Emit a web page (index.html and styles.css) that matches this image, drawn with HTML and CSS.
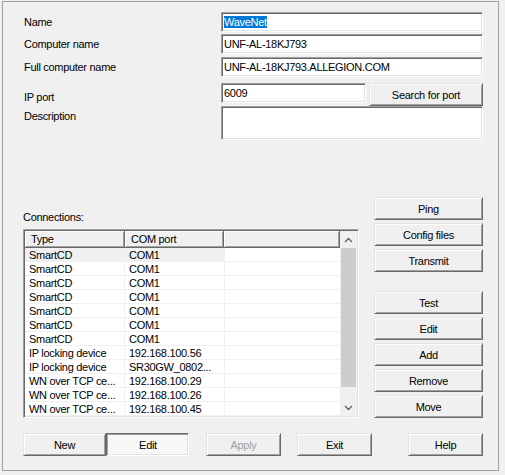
FILE: index.html
```html
<!DOCTYPE html>
<html lang="en">
<head>
  <meta charset="UTF-8">
  <title>WaveNet connection</title>
  <link rel="stylesheet" href="styles.css">
</head>
<body>
  <div class="frame">
    <div class="form">
      <div class="label">Name</div>
      <div class="field"><span class="sel">WaveNet</span></div>
      <div class="label">Computer name</div>
      <div class="field">UNF-AL-18KJ793</div>
      <div class="label">Full computer name</div>
      <div class="field">UNF-AL-18KJ793.ALLEGION.COM</div>
      <div class="label label-low">IP port</div>
      <div class="port-row">
        <div class="field port">6009</div>
        <button class="btn search">Search for port</button>
      </div>
      <div class="label">Description</div>
      <div class="field memo"></div>
    </div>

    <div class="lower">
      <div class="conn">
        <div class="conn-label">Connections:</div>
        <div class="list">
          <div class="list-body">
            <div class="list-head">
              <div class="hcell">Type</div>
              <div class="hcell">COM port</div>
              <div class="hcell"></div>
            </div>
            <div class="row hot"><div>SmartCD</div><div>COM1</div><div></div></div>
            <div class="row"><div>SmartCD</div><div>COM1</div><div></div></div>
            <div class="row"><div>SmartCD</div><div>COM1</div><div></div></div>
            <div class="row"><div>SmartCD</div><div>COM1</div><div></div></div>
            <div class="row"><div>SmartCD</div><div>COM1</div><div></div></div>
            <div class="row"><div>SmartCD</div><div>COM1</div><div></div></div>
            <div class="row"><div>SmartCD</div><div>COM1</div><div></div></div>
            <div class="row"><div>IP locking device</div><div>192.168.100.56</div><div></div></div>
            <div class="row"><div>IP locking device</div><div>SR30GW_0802...</div><div></div></div>
            <div class="row"><div>WN over TCP ce...</div><div>192.168.100.29</div><div></div></div>
            <div class="row"><div>WN over TCP ce...</div><div>192.168.100.26</div><div></div></div>
            <div class="row"><div>WN over TCP ce...</div><div>192.168.100.45</div><div></div></div>
          </div>
          <div class="scrollbar">
            <div class="arrow">
              <svg width="9" height="6" viewBox="0 0 9 6"><path d="M1 5 L4.5 1.5 L8 5" fill="none" stroke="#606060" stroke-width="1.4"/></svg>
            </div>
            <div class="thumb"></div>
            <div class="track"></div>
            <div class="arrow">
              <svg width="9" height="6" viewBox="0 0 9 6"><path d="M1 1 L4.5 4.5 L8 1" fill="none" stroke="#606060" stroke-width="1.4"/></svg>
            </div>
          </div>
        </div>
      </div>

      <div class="side">
        <button class="btn">Ping</button>
        <button class="btn">Config files</button>
        <button class="btn group-end">Transmit</button>
        <button class="btn">Test</button>
        <button class="btn">Edit</button>
        <button class="btn">Add</button>
        <button class="btn">Remove</button>
        <button class="btn">Move</button>
      </div>
    </div>

    <div class="footer">
      <button class="btn wide">New</button>
      <button class="btn wide pressed">Edit</button>
      <button class="btn apply" disabled>Apply</button>
      <button class="btn exit">Exit</button>
      <button class="btn help">Help</button>
    </div>
  </div>
</body>
</html>
```

FILE: styles.css
```css
body {
  margin: 0;
  background-color: #f0f0f0;
  font-family: "Liberation Sans", Arial, sans-serif;
  font-size: 11px;
  letter-spacing: -0.3px;
  color: #000;
}

.frame {
  box-sizing: border-box;
  width: 497px;
  height: 470px;
  margin: 1px 0 0 2px;
  border: 1px solid #a0a0a0;
}

/* top form */

.form {
  display: grid;
  grid-template-columns: 197px 262px;
  grid-template-rows: 22px 23px 26px 23px 34px;
  margin-top: 10px;
  padding-left: 21px;
}

.label {
  line-height: 13px;
  padding-top: 4px;
}

.label-low {
  padding-top: 8px;
}

.field {
  box-sizing: border-box;
  height: 20px;
  background: #fff;
  border: 1px solid;
  border-color: #a0a0a0 #fff #fff #a0a0a0;
  box-shadow: inset 1px 1px #696969, inset -1px -1px #e3e3e3;
  padding: 1px 2px 0 2px;
  line-height: 16px;
  white-space: nowrap;
}

.sel {
  background: #0078d7;
  color: #fff;
}

.port-row {
  display: flex;
  gap: 3px;
}

.port {
  width: 145px;
}

.memo {
  height: 34px;
}

/* buttons */

.btn {
  box-sizing: border-box;
  height: 23px;
  padding: 0;
  font: inherit;
  letter-spacing: inherit;
  color: #000;
  background: #f0f0f0;
  border: 1px solid;
  border-color: #e3e3e3 #696969 #696969 #e3e3e3;
  box-shadow: inset 1px 1px #fff, inset -1px -1px #a0a0a0;
  text-align: center;
}

.search {
  flex: 1;
}

.btn:disabled {
  color: #a0a0a0;
}

.pressed {
  border-color: #696969 #fff #fff #696969;
  box-shadow: inset 1px 1px #a0a0a0, inset -1px -1px #e3e3e3;
  background: repeating-conic-gradient(#fff 0 25%, #f0f0f0 0 50%) 0 0 / 2px 2px;
  padding: 1px 0 0 1px;
}

/* connections */

.lower {
  display: flex;
  gap: 15px;
  margin-top: 57px;
  padding-left: 20px;
}

.conn {
  width: 336px;
  padding-top: 14px;
}

.conn-label {
  line-height: 13px;
}

.list {
  box-sizing: border-box;
  display: flex;
  height: 189px;
  margin-top: 5px;
  background: #fff;
  border: 1px solid;
  border-color: #a0a0a0 #fff #fff #a0a0a0;
  box-shadow: inset 1px 1px #696969, inset -1px -1px #e3e3e3;
  padding: 1px;
}

.list-body {
  flex: 1;
  overflow: hidden;
}

.list-head {
  display: grid;
  grid-template-columns: 100px 99px 1fr;
  height: 17px;
}

.hcell {
  box-sizing: border-box;
  background: #f0f0f0;
  border-right: 1px solid #696969;
  border-bottom: 1px solid #696969;
  box-shadow: inset 1px 1px #fff, inset -1px -1px #a0a0a0;
  padding: 1px 0 0 6px;
  line-height: 14px;
}

.row {
  box-sizing: border-box;
  display: grid;
  grid-template-columns: 100px 100px 1fr;
  height: 14px;
  border-bottom: 1px solid #f0f0f0;
}

.row div {
  border-right: 1px solid #f0f0f0;
  padding: 2px 0 0 4px;
  line-height: 11px;
  white-space: nowrap;
  overflow: hidden;
}

.row div:last-child {
  border-right: none;
}

.row.hot div:nth-child(-n+2) {
  background: #f0f0f0;
}

.scrollbar {
  display: flex;
  flex-direction: column;
  width: 17px;
  background: #f0f0f0;
}

.arrow {
  display: flex;
  align-items: center;
  justify-content: center;
  height: 17px;
}

.thumb {
  height: 139px;
  margin: 0 1px;
  background: #cdcdcd;
}

.track {
  flex: 1;
}

.side {
  display: flex;
  flex-direction: column;
  gap: 3px;
  width: 109px;
}

.group-end {
  margin-bottom: 16px;
}

/* bottom buttons */

.footer {
  display: flex;
  margin-top: 15px;
  padding-left: 20px;
}

.wide {
  width: 83px;
}

.apply,
.exit,
.help {
  width: 75px;
}

.apply {
  margin-left: 17px;
}

.exit {
  margin-left: 16px;
}

.help {
  margin-left: 36px;
}
```
